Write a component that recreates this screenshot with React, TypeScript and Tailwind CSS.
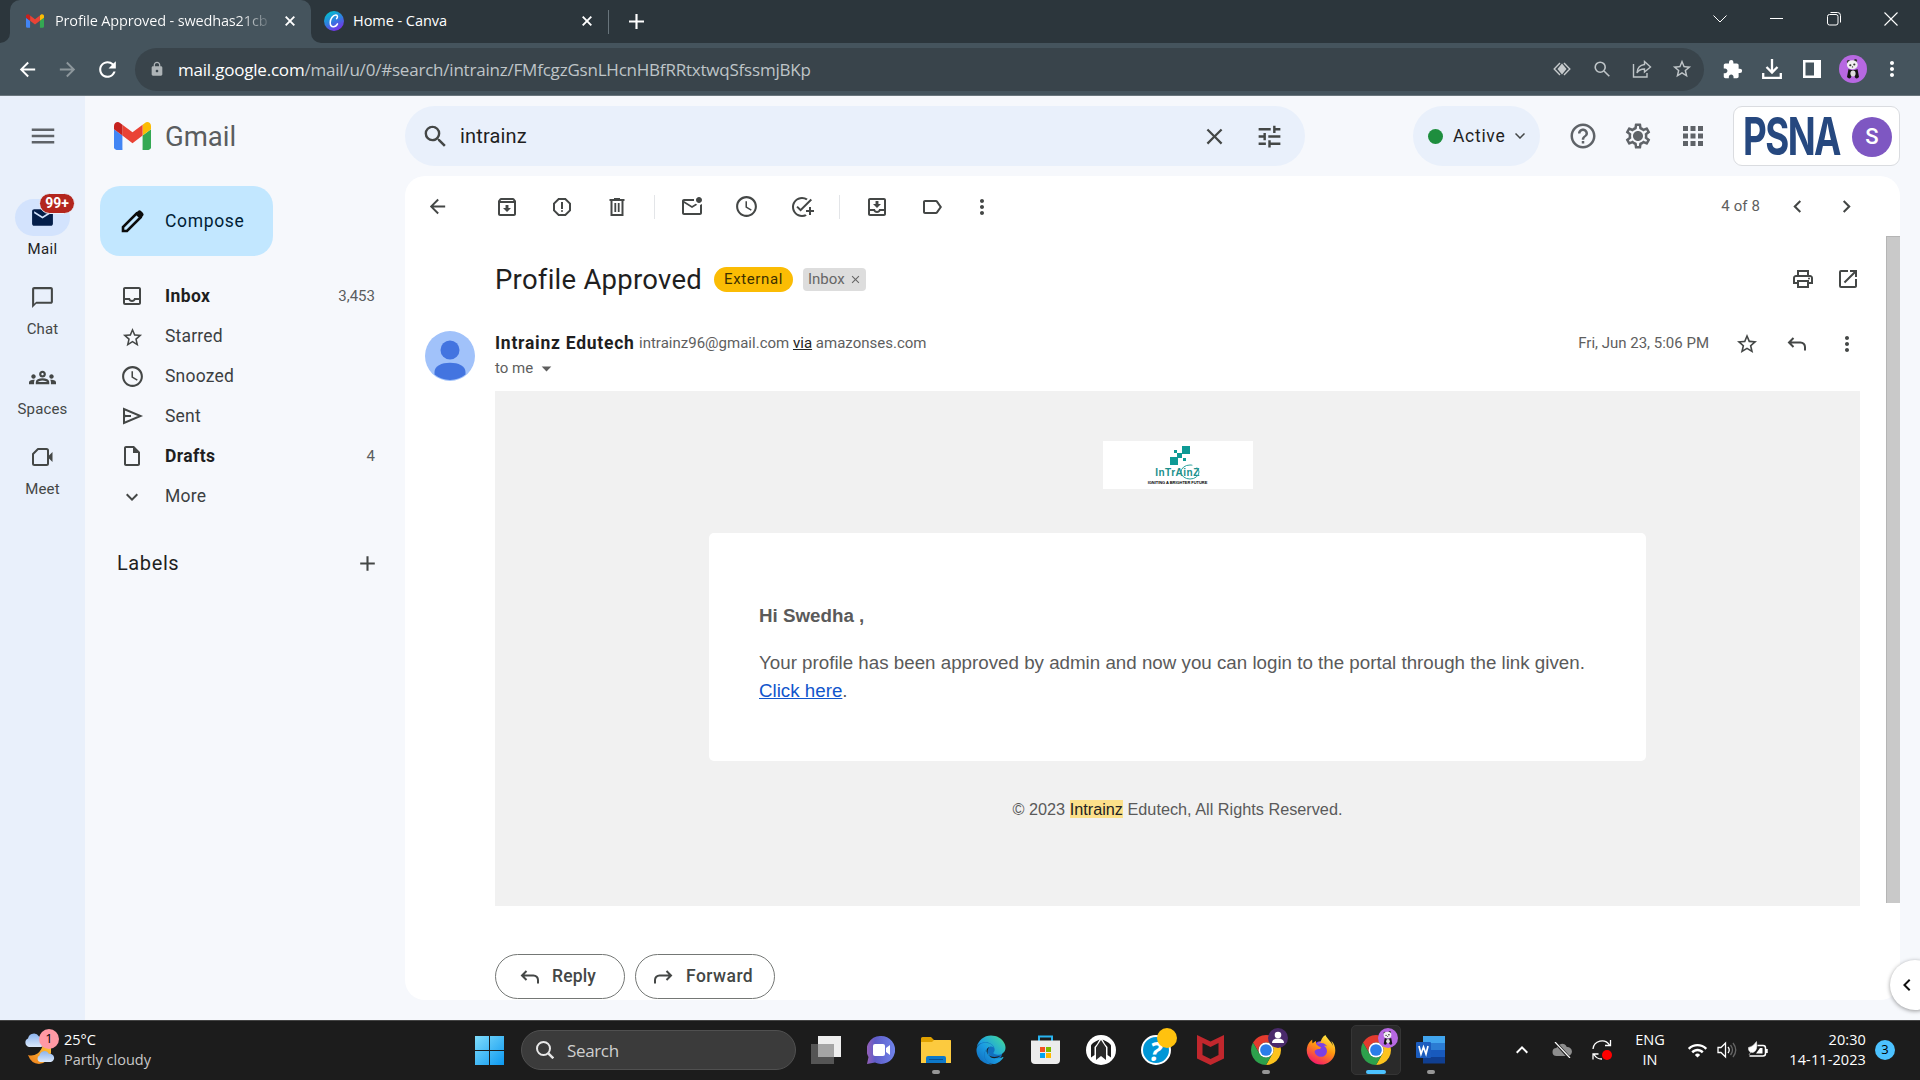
import React from "react";
import {
  MdAddTask, MdApps, MdArrowBack, MdArrowForward, MdChevronLeft, MdChevronRight, MdClose, MdExpandMore,
  MdExtension, MdHelpOutline, MdKeyboardArrowUp, MdLabelOutline, MdLock, MdMail, MdMenu, MdMoreVert, MdOpenInNew,
  MdOutlineArchive, MdOutlineChatBubbleOutline, MdOutlineDelete, MdOutlineGroups, MdOutlineInbox,
  MdOutlineInsertDriveFile, MdOutlineMarkEmailUnread, MdOutlineMoveToInbox, MdOutlinePrint, MdOutlineReport,
  MdOutlineSchedule, MdOutlineSettings, MdRefresh, MdSearch, MdStarBorder, MdTune, MdWifi,
  MdAdd, MdArrowDropDown,
} from "react-icons/md";
import { FaEdge, FaFirefoxBrowser } from "react-icons/fa";

type P = { className?: string };

const GmailLogo = ({ className }: P) => (
  <svg viewBox="52 42 88 66" className={className}>
    <path fill="#4285f4" d="M58 108h14V74L52 59v43c0 3.32 2.69 6 6 6" />
    <path fill="#34a853" d="M120 108h14c3.32 0 6-2.69 6-6V59l-20 15" />
    <path fill="#fbbc04" d="M120 48v26l20-15v-8c0-7.42-8.47-11.65-14.4-7.2" />
    <path fill="#ea4335" d="M72 74V48l24 18 24-18v26L96 92" />
    <path fill="#c5221f" d="M52 51v8l20 15V48l-5.6-4.2c-5.94-4.45-14.4-.22-14.4 7.2" />
  </svg>
);

const CanvaLogo = () => (
  <svg viewBox="0 0 20 20" className="h-5 w-5">
    <defs>
      <linearGradient id="canva" x1="0.2" y1="0" x2="0.7" y2="1">
        <stop offset="0" stopColor="#00c4cc" />
        <stop offset="0.5" stopColor="#2f7fe0" />
        <stop offset="1" stopColor="#7d2ae8" />
      </linearGradient>
    </defs>
    <circle cx="10" cy="10" r="10" fill="url(#canva)" />
    <path d="M12.600 7.600c1.300-1.100 1.200-3.600-.7-3.600C8.800 4 6.200 8.300 6.200 11.500c0 2.500 1.300 4.200 3.200 4.200 1.900 0 3.300-1.300 4.100-2.900" fill="none" stroke="#fff" strokeWidth="1.500" strokeLinecap="round" />
  </svg>
);

const TabClose = () => (
  <svg viewBox="0 0 10 10" className="h-[10px] w-[10px]" fill="none" stroke="#fff" strokeWidth="1.900"><path d="m.7.7 8.600 8.600M9.300.7.7 9.300" /></svg>
);

const Panda = ({ className }: P) => (
  <svg viewBox="0 0 28 28" className={className}>
    <circle cx="14" cy="14" r="14" fill="#b768e2" />
    <path d="M9.500 14c2 1.500 7 1.500 9 0l1.500 8q-2 2.500-4 .5l-.5-2h-3l-.5 2q-2 2-4-.5z" fill="#151515" />
    <ellipse cx="14" cy="18.500" rx="2.600" ry="3" fill="#ddd" />
    <circle cx="9.500" cy="6.800" r="1.700" fill="#333" />
    <circle cx="16.500" cy="5.800" r="1.700" fill="#333" />
    <ellipse cx="13.300" cy="9.800" rx="5.400" ry="4.500" fill="#f0f0f0" />
    <ellipse cx="11.300" cy="10.300" rx="1.100" ry="1" fill="#333" />
    <ellipse cx="15.300" cy="9.500" rx="1.100" ry="1" fill="#333" />
    <circle cx="13.500" cy="11.900" r=".7" fill="#333" />
  </svg>
);

const Chrome = () => {
  const seg = "M6.680 14A20 20 0 0 1 41.320 14H24A10 10 0 0 0 15.340 29Z";
  return (
    <svg viewBox="4 4 40 40" className="h-[30px] w-[30px]">
      <path d={seg} fill="#e33b2e" />
      <path d={seg} fill="#fcc31e" transform="rotate(120 24 24)" />
      <path d={seg} fill="#2da14c" transform="rotate(240 24 24)" />
      <circle cx="24" cy="24" r="10" fill="#fff" />
      <circle cx="24" cy="24" r="7.800" fill="#2b7de9" />
    </svg>
  );
};

const Reply = ({ className }: P) => (
  <svg viewBox="0 0 24 24" className={className} fill="none" stroke="currentColor" strokeWidth="2">
    <path d="M8.500 6 4 10.500 8.500 15M4 10.500h11.500a4.500 4.500 0 0 1 4.500 4.500v3.500" />
  </svg>
);

const Pencil = () => (
  <svg viewBox="0 0 24 24" className="h-[24px] w-[24px]" fill="none" stroke="#0b0b0b" strokeWidth="2.600">
    <path d="M2 22v-4L15.500 4.500l4 4L6 22z" />
    <path d="M14.500 4.500 17 2q1.500-1.300 3 0l2 2q1.300 1.500 0 3l-2.500 2.500z" fill="#0b0b0b" stroke="none" />
  </svg>
);

const Meet = () => (
  <svg viewBox="0 0 24 24" className="h-[24px] w-[24px]" fill="none" stroke="#444746" strokeWidth="2">
    <path d="M8 4h8.500Q18 4 18 5.500v13q0 1.500-1.500 1.500h-12Q3 20 3 18.500V9z" strokeLinejoin="round" />
    <path d="M18 11.500 22.500 7v10L18 12.500z" fill="#444746" stroke="none" />
  </svg>
);

const Sent = () => (
  <svg viewBox="0 0 24 24" className="h-[24px] w-[24px]" fill="none" stroke="#444746" strokeWidth="2">
    <path d="M4 5v14l16.500-7zM4 12h7" />
    <path d="M4 10.500v3l7-1.500z" fill="#444746" stroke="none" />
  </svg>
);

const Cell = ({ className = "", children }: { className?: string; children?: React.ReactNode }) => (
  <div className={`flex shrink-0 items-center justify-center ${className}`}>{children}</div>
);

function TabStrip() {
  return (
    <div className="flex h-[43px] items-stretch bg-[#2c363c] font-['Open_Sans','Noto_Sans',sans-serif] text-[14.5px] text-white">
      <div className="flex w-[10px] bg-[#45545d]"><div className="w-full rounded-br-[10px] bg-[#2c363c]" /></div>
      <div className="flex w-[301px] items-center rounded-t-[10px] bg-[#45545d] pb-px pl-4">
        <GmailLogo className="h-[14px] w-[18px]" />
        <div className="ml-[11px] w-[215px] overflow-hidden whitespace-nowrap bg-gradient-to-r from-white from-85% to-white/10 bg-clip-text tracking-[-0.15px] text-transparent">Profile Approved - swedhas21cb</div>
        <Cell className="w-[40px]"><TabClose /></Cell>
      </div>
      <div className="flex w-[297px] bg-[#45545d]">
        <div className="flex w-full items-center rounded-bl-[10px] bg-[#2c363c] pb-px pl-[13px]">
          <CanvaLogo />
          <span className="ml-[9px] w-[214px] tracking-[-0.05px]">Home - Canva</span>
          <Cell className="w-[40px]"><TabClose /></Cell>
        </div>
      </div>
      <div className="flex flex-1 bg-[#45545d]">
        <div className="flex w-full items-center bg-[#2c363c]">
          <div className="h-6 w-px bg-[#68747b]" />
          <Cell className="w-[54px]"><svg viewBox="0 0 14 14" className="h-[15px] w-[15px]" stroke="#fff" strokeWidth="2"><path d="M7 0v14M0 7h14" /></svg></Cell>
        </div>
      </div>
      <div className="flex items-center bg-[#2c363c] pb-[6px]">
        <Cell className="w-[57px]"><svg viewBox="0 0 14 8" className="h-[8px] w-[14px]" fill="none" stroke="#fff"><path d="m.5.5 6.500 6.500L13.500.5" /></svg></Cell>
        <Cell className="w-[57px]"><div className="h-px w-[13px] bg-white" /></Cell>
        <Cell className="w-[57px]"><svg viewBox="0 0 14 14" className="h-[14px] w-[14px]" fill="none" stroke="#fff"><rect x=".5" y="2.500" width="10.500" height="10.500" rx="2" /><path d="M3.500.5h7q3 0 3 3v7" /></svg></Cell>
        <Cell className="w-[58px]"><svg viewBox="0 0 14 14" className="h-[14px] w-[14px]" stroke="#fff" strokeWidth="1.100"><path d="m.5.5 13 13M13.500.5l-13 13" /></svg></Cell>
      </div>
    </div>
  );
}

function AddressBar() {
  return (
    <div className="flex h-[53px] items-center border-b border-[#6a767d] bg-[#45545d] pl-[7px] text-white">
      <Cell className="w-10"><MdArrowBack className="h-[23px] w-[23px]" /></Cell>
      <Cell className="w-10"><MdArrowForward className="h-[23px] w-[23px] text-[#8d979c]" /></Cell>
      <Cell className="w-10"><MdRefresh className="h-[25px] w-[25px]" /></Cell>
      <div className="ml-[8px] flex h-[43px] w-[1569px] items-center rounded-full bg-[#39444b] pl-[14px] text-[#bfc5c8]">
        <MdLock className="h-4 w-4 text-[#aeb4b7]" />
        <span className="ml-[13px] flex-1 whitespace-nowrap pt-px font-['Open_Sans','Noto_Sans',sans-serif] text-[17px] tracking-[-0.21px]"><span className="text-white">mail.google.com</span>/mail/u/0/#search/intrainz/FMfcgzGsnLHcnHBfRRtxtwqSfssmjBKp</span>
        <Cell className="w-10">
          <svg viewBox="0 0 18 14" className="h-[14px] w-[18px]" fill="none" stroke="#c6cacc" strokeWidth="1.400"><path d="M7 1 1.200 7 7 13M11 1l5.800 6L11 13" /><path d="M9 1.500 4.500 7 9 12.500 13.500 7z" fill="#c6cacc" stroke="none" /></svg>
        </Cell>
        <Cell className="w-10"><svg viewBox="0 0 16 16" className="h-4 w-4" fill="none" stroke="currentColor" strokeWidth="1.600"><circle cx="6.200" cy="6.200" r="5" /><path d="m10 10 5.300 5.300" /></svg></Cell>
        <Cell className="w-10"><svg viewBox="0 0 20 18" className="h-[18px] w-5" fill="none" stroke="currentColor" strokeWidth="1.400"><path d="M1.500 4v13h13.500v-4" /><path d="M12.500 1.500 18.500 7l-6 5V9c-4 0-6 1.200-7.500 4 .3-5 3-8 7.500-8.500z" /></svg></Cell>
        <Cell className="mr-[2px] w-10"><MdStarBorder className="h-[22px] w-[22px]" /></Cell>
      </div>
      <div className="ml-[8px] flex items-center">
        <Cell className="w-10"><MdExtension className="h-[21px] w-[21px]" /></Cell>
        <Cell className="w-10"><svg viewBox="0 0 20 20" className="h-5 w-5" fill="none" stroke="#fff" strokeWidth="2.300"><path d="M10 0v13M4.500 8 10 13.500 15.500 8M1.200 14v4.800h17.600V14" /></svg></Cell>
        <Cell className="w-10"><svg viewBox="0 0 18 18" className="h-[18px] w-[18px]"><path fill="#fff" fillRule="evenodd" d="M0 0h18v18H0zM2.500 2.500v13H11v-13z" /></svg></Cell>
        <Cell className="w-[41px]"><Panda className="h-7 w-7" /></Cell>
        <Cell className="w-[38px]"><MdMoreVert className="h-6 w-6" /></Cell>
      </div>
    </div>
  );
}

function Rail() {
  const items = [
    { label: "Chat", icon: <MdOutlineChatBubbleOutline className="h-[25px] w-[25px]" /> },
    { label: "Spaces", icon: <MdOutlineGroups className="h-[27px] w-[27px]" /> },
    { label: "Meet", icon: <Meet /> },
  ];
  return (
    <div className="flex w-[85px] shrink-0 flex-col items-center bg-[#e9f0fb] pt-[25px] text-[15px] text-[#444746]">
      <MdMenu className="h-[30px] w-[30px] text-[#5f6368]" />
      <div className="mt-[48px] flex h-[80px] flex-col items-center">
        <div className="relative flex h-[37px] w-[55px] items-center justify-center rounded-full bg-[#d3e3fd]">
          <MdMail className="h-[25px] w-[25px] text-[#041e49]" />
          <div className="absolute left-[24px] top-[-6px] flex h-[21px] w-[36px] items-center justify-center rounded-full border border-[#e9f0fb] bg-[#b3261e] text-[14px] font-bold text-white">99+</div>
        </div>
        <span className="mt-[4px] leading-[18px] tracking-[0.4px] text-[#1f1f1f]">Mail</span>
      </div>
      {items.map((i) => (
        <div key={i.label} className="flex h-[80px] flex-col items-center">
          <Cell className="h-[36px]">{i.icon}</Cell>
          <span className="mt-[5px] leading-[18px] tracking-[0.15px]">{i.label}</span>
        </div>
      ))}
    </div>
  );
}

function Sidebar() {
  const ic = "h-[25px] w-[25px] text-[#444746]";
  const rows = [
    { label: "Inbox", bold: true, count: "3,453", icon: <MdOutlineInbox className="h-[24px] w-[24px] text-[#444746]" /> },
    { label: "Starred", icon: <MdStarBorder className="mt-[2px] h-[23px] w-[23px] text-[#444746]" /> },
    { label: "Snoozed", icon: <MdOutlineSchedule className={ic} /> },
    { label: "Sent", icon: <Sent /> },
    { label: "Drafts", bold: true, count: "4", icon: <MdOutlineInsertDriveFile className="h-[24px] w-[24px] text-[#444746]" /> },
    { label: "More", icon: <MdExpandMore className="mt-px h-[24px] w-[24px] text-[#444746]" /> },
  ];
  return (
    <div className="flex w-[320px] shrink-0 flex-col">
      <div className="flex h-[80px] items-center pl-[29px]">
        <GmailLogo className="h-[28px] w-[37px]" />
        <span className="ml-[14px] pt-[2px] text-[27.500px] text-[#5a5d60]">Gmail</span>
      </div>
      <div className="ml-[15px] mt-[10px] flex h-[70px] w-[173px] items-center rounded-[20px] bg-[#c2e7ff] pl-[21px]">
        <Pencil />
        <span className="ml-[20px] text-[17.500px] tracking-[0.65px] text-[#001d35]">Compose</span>
      </div>
      <div className="mt-5">
        {rows.map((r) => (
          <div key={r.label} className="flex h-10 items-center pl-[27px] pr-[30px] text-[17.500px]">
            <Cell className="w-10">{r.icon}</Cell>
            <span className={`ml-[13px] flex-1 pt-px ${r.bold ? "font-bold tracking-[0.4px] text-[#1f1f1f]" : "tracking-[0.2px] text-[#3c3f42]"}`}>{r.label}</span>
            <span className="text-[15px] text-[#5a5d60]">{r.count}</span>
          </div>
        ))}
      </div>
      <div className="mt-[27px] flex h-10 items-center justify-between pl-[32px] pr-[25px] text-[20px] tracking-[0.6px] text-[#1f1f1f]">
        Labels
        <MdAdd className="h-[25px] w-[25px] text-[#444746]" />
      </div>
    </div>
  );
}

function Header() {
  return (
    <div className="flex h-[80px] items-center text-[#5f6368]">
      <div className="flex h-[60px] w-[900px] items-center rounded-full bg-[#e9f0fb] pl-[16px] text-[#444746]">
        <MdSearch className="h-[29px] w-[29px]" />
        <span className="ml-[10px] flex-1 text-[20px] tracking-[0.15px] text-[#1f1f1f]">intrainz</span>
        <Cell className="w-[55px]"><MdClose className="h-[27px] w-[27px]" /></Cell>
        <Cell className="mr-[8px] w-[55px]"><MdTune className="h-[29px] w-[29px]" /></Cell>
      </div>
      <div className="ml-[108px] flex h-[60px] w-[127px] items-center rounded-full bg-[#e9f0fb] pl-[15px]">
        <div className="h-[15px] w-[15px] rounded-full bg-[#1e8e3e]" />
        <span className="ml-[10px] w-[53px] pt-px text-[17.500px] tracking-[0.7px] text-[#1f1f1f]">Active</span>
        <Cell className="w-[27px]"><svg viewBox="0 0 10 6" className="h-[6px] w-[10px]" fill="none" stroke="#444746" strokeWidth="1.500"><path d="m.5.5 4.500 4.500L9.500.5" /></svg></Cell>
      </div>
      <Cell className="ml-[15px] w-[55px]"><MdHelpOutline className="h-[30px] w-[30px]" /></Cell>
      <Cell className="w-[55px]"><svg viewBox="0 0 24 24" className="h-[30px] w-[30px]"><MdOutlineSettings className="h-6 w-6" /><circle cx="12" cy="12" r="3.400" fill="#5f6368" /></svg></Cell>
      <Cell className="w-[55px]"><MdApps className="h-[30px] w-[30px]" /></Cell>
      <div className="ml-[13px] flex h-[60px] w-[167px] items-center rounded-[9px] border border-[#dadce0] bg-white pl-[9px]">
        <div className="h-[50px] w-[97px]">
          <span className="block h-[50px] w-[130px] origin-left scale-x-[0.78] scale-y-[1.1] font-['Inter',sans-serif] text-[47px] font-bold leading-[50px] tracking-[-2px] text-[#26487f]">PSNA</span>
        </div>
        <Cell className="ml-[12px] mt-px h-[40px] w-[40px] rounded-full bg-[#7e57c2] text-[22px] font-medium text-white">S</Cell>
      </div>
    </div>
  );
}

function MailToolbar() {
  const ic = "h-[24px] w-[24px]";
  return (
    <div className="flex h-[60px] shrink-0 items-center pl-[4px] pt-px text-[#444746]">
      <Cell className="w-[56px]"><MdArrowBack className="h-[23px] w-[23px]" /></Cell>
      <Cell className="ml-[14px] w-[55px]"><MdOutlineArchive className={ic} /></Cell>
      <Cell className="w-[55px]"><MdOutlineReport className={ic} /></Cell>
      <Cell className="w-[55px]">
        <svg viewBox="0 0 24 24" className={ic} fill="none" stroke="#444746" strokeWidth="2"><path d="M4.500 5h15M9 4h6M6.500 5v15h11V5" /><path d="M10.300 8v9M13.700 8v9" strokeWidth="1.800" /></svg>
      </Cell>
      <Cell className="w-5"><div className="h-6 w-px bg-[#e3e5e8]" /></Cell>
      <Cell className="w-[55px]"><MdOutlineMarkEmailUnread className={ic} /></Cell>
      <Cell className="w-[55px]"><MdOutlineSchedule className="h-[25px] w-[25px]" /></Cell>
      <Cell className="w-[55px]"><MdAddTask className={ic} /></Cell>
      <Cell className="w-5"><div className="h-6 w-px bg-[#e3e5e8]" /></Cell>
      <Cell className="w-[55px]"><MdOutlineMoveToInbox className={ic} /></Cell>
      <Cell className="w-[55px]"><MdLabelOutline className={ic} /></Cell>
      <Cell className="ml-px w-[44px]"><MdMoreVert className={ic} /></Cell>
      <span className="ml-auto text-[15px] tracking-[0.1px] text-[#5e5e5e]">4 of 8</span>
      <Cell className="ml-[13px] w-[49px]"><MdChevronLeft className="h-[25px] w-[25px]" /></Cell>
      <Cell className="mr-[29px] w-[49px]"><MdChevronRight className="h-[25px] w-[25px]" /></Cell>
    </div>
  );
}

function IntrainzLogo() {
  return (
    <div className="relative flex h-[48px] w-[150px] flex-col items-center bg-white pt-[5px]">
      <svg viewBox="0 0 20 19" className="ml-[4px] h-[19px] w-5" fill="#0e9a95"><path d="M12 0h8v8h-8zM7 7h5v5H7zM0 11h8v8H0zM4 4h3v3H4zM13 12h3v3h-3z" /></svg>
      <span className="mt-[1px] text-[10px] font-bold leading-[13px] tracking-[0.500px] text-[#1b8f8c]">InTrAinZ</span>
      <svg viewBox="0 0 20 16" className="absolute left-[77px] top-[23px] h-[16px] w-5" fill="none" stroke="#2aa29e"><ellipse cx="10" cy="8" rx="9" ry="7" strokeDasharray="40 5" /></svg>
      <span className="mt-[1px] whitespace-nowrap text-[4px] font-black leading-[5px] tracking-[-0.050px] text-black">IGNITING A BRIGHTER FUTURE</span>
    </div>
  );
}

function Message() {
  return (
    <div className="flex min-h-0 flex-1">
      <div className="flex w-[1481px] flex-col">
        <div className="flex h-[86px] items-center pl-[90px] text-[#444746]">
          <span className="w-[219px] whitespace-nowrap pt-px text-[27.500px] tracking-[0.25px] text-[#1f1f1f]">Profile Approved</span>
          <Cell className="h-[25px] w-[79px] rounded-full bg-[#fbbc04] text-[15px] tracking-[0.6px] text-[#3c3000]">External</Cell>
          <div className="ml-[10px] flex h-[23px] w-[63px] items-center rounded-[4px] bg-[#ddd] pl-[5px] text-[15px] text-[#666]">Inbox<MdClose className="ml-[4px] h-[13px] w-[13px]" /></div>
          <Cell className="ml-auto w-[45px]"><MdOutlinePrint className="h-[24px] w-[24px]" /></Cell>
          <Cell className="mr-[16px] w-[45px]"><MdOpenInNew className="h-[24px] w-[24px]" /></Cell>
        </div>
        <div className="flex h-[69px] pl-[20px] pt-[9px]">
          <svg viewBox="0 0 50 50" className="h-[50px] w-[50px]">
            <circle cx="25" cy="25" r="25" fill="#a1c2fa" />
            <circle cx="25" cy="19" r="9.500" fill="#4374e0" />
            <path d="M9.500 43.500V41c0-6 7-9.300 15.500-9.300S40.500 35 40.500 41v2.500A25 25 0 0 1 9.500 43.500Z" fill="#4374e0" />
          </svg>
          <div className="ml-[20px] flex flex-1 flex-col text-[15px] text-[#5e5e5e]">
            <div className="flex h-[24px] items-center whitespace-nowrap">
              <span className="w-[144px] text-[17.500px] font-bold tracking-[0.75px] text-[#1f1f1f]">Intrainz Edutech</span>
              <span className="tracking-[0.01px]">intrainz96@gmail.com <span className="text-[#222] underline">via</span> amazonses.com</span>
            </div>
            <div className="flex h-[26px] items-center">to me<MdArrowDropDown className="ml-[2px] h-[23px] w-[23px]" /></div>
          </div>
          <div className="flex h-[26px] items-center text-[#444746]">
            <span className="mr-[12px] pb-[2px] text-[15px] text-[#5e5e5e]">Fri, Jun 23, 5:06 PM</span>
            <Cell className="w-[51px]"><MdStarBorder className="h-[24px] w-[24px]" /></Cell>
            <Cell className="w-[50px]"><Reply className="h-[24px] w-[24px]" /></Cell>
            <Cell className="mr-[15px] w-[49px]"><MdMoreVert className="h-[24px] w-[24px]" /></Cell>
          </div>
        </div>
        <div className="ml-[90px] flex h-[515px] w-[1365px] flex-col items-center bg-[#f1f1f1] pt-[50px] font-['Liberation_Sans',sans-serif] text-[#5a5a5a]">
          <IntrainzLogo />
          <div className="mt-[44px] h-[228px] w-[937px] rounded-[5px] bg-white px-[50px] pt-[69px] text-[18.750px] leading-[28px]">
            <p className="whitespace-nowrap font-bold">Hi Swedha ,</p>
            <p className="mt-[19px] whitespace-nowrap">Your profile has been approved by admin and now you can login to the portal through the link given.<br /><a className="text-[#1155cc] underline">Click here</a>.</p>
          </div>
          <p className="mt-[38px] text-[16.250px] leading-[20px]">© 2023 <span className="bg-[#fce08a] text-[#222]">Intrainz</span> Edutech, All Rights Reserved.</p>
        </div>
        <div className="ml-[90px] mt-[48px] flex gap-[10px] text-[17.500px] font-medium tracking-[0.15px] text-[#444746]">
          <div className="flex h-[45px] w-[130px] items-center rounded-full border border-[#747775] pl-[22px]"><Reply className="mr-[10px] h-[24px] w-[24px]" />Reply</div>
          <div className="flex h-[45px] w-[140px] items-center rounded-full border border-[#747775] pl-[15px]"><Reply className="mr-[11px] h-[24px] w-[24px] -scale-x-100" /><span className="tracking-[0.45px]">Forward</span></div>
        </div>
      </div>
      <div className="h-[667px] w-[14px] border-l border-t border-[#b5b5b5] bg-[#c9c9c9]" />
    </div>
  );
}

const Dot = () => <div className="absolute bottom-[6px] h-[4px] w-[8px] rounded-full bg-[#969696]" />;
const App55 = ({ children, dot }: { children: React.ReactNode; dot?: boolean }) => (
  <div className="relative flex h-[60px] w-[55px] shrink-0 items-center justify-center">{children}{dot && <Dot />}</div>
);

function Taskbar() {
  return (
    <div className="flex h-[60px] items-center border-t border-[#444] bg-[#1c1c1c] pb-px font-['Open_Sans','Noto_Sans',sans-serif] text-[14.500px] text-white">
      <div className="flex w-[462px] items-center pl-[24px]">
        <div className="relative -mt-[4px] h-[38px] w-[34px]">
          <svg viewBox="0 0 34 38" className="h-[38px] w-[34px]">
            <defs><linearGradient id="moon" x1="1" y1="0" x2="0" y2="1"><stop offset="0" stopColor="#ffc93c" /><stop offset="1" stopColor="#ef7d1a" /></linearGradient>
              <linearGradient id="cloud" x1="0" y1="0" x2="0" y2="1"><stop offset="0" stopColor="#8cb4ee" /><stop offset="1" stopColor="#dbe9fc" /></linearGradient></defs>
            <path d="M27 14v10q-3 10-12 11Q7 34.500 4 26q5 1.500 9.500-1.500Q18 21 19 15z" fill="url(#moon)" />
            <path d="M5 18a4.500 4.500 0 0 1-1-8.500 6 6 0 0 1 11-2 5 5 0 0 1 2 10.500z" fill="url(#cloud)" />
            <path d="M16 33a3.500 3.500 0 0 1-.5-6.500 5 5 0 0 1 9.500-1.500 4 4 0 0 1 2 8z" fill="url(#cloud)" />
          </svg>
          <Cell className="absolute left-[15px] top-0 h-5 w-5 rounded-full bg-[#ff99a4] text-[13px] text-black">1</Cell>
        </div>
        <div className="ml-[6px] leading-[20px]"><div>25°C</div><div className="text-[#c8c8c8]">Partly cloudy</div></div>
      </div>
      <App55>
        <svg viewBox="0 0 29 29" className="h-[29px] w-[29px]"><defs><linearGradient id="win" gradientUnits="userSpaceOnUse" x1="0" y1="0" x2="29" y2="29"><stop offset="0" stopColor="#7fdcfb" /><stop offset="1" stopColor="#0c98f0" /></linearGradient></defs><path d="M0 0h14v14H0zM15 0h14v14H15zM0 15h14v14H0zM15 15h14v14H15z" fill="url(#win)" /></svg>
      </App55>
      <div className="ml-[4px] flex h-[40px] w-[275px] items-center rounded-full border border-[#505050] bg-[#3b3b3b] pl-[14px] text-[17px] text-[#cfcfcf]">
        <svg viewBox="0 0 18 18" className="h-[18px] w-[18px]" fill="none" stroke="#e8e8e8" strokeWidth="2"><circle cx="7.500" cy="7.500" r="6.500" /><path d="m12.300 12.300 5 5" strokeWidth="2.400" /></svg>
        <span className="ml-[13px] pt-px tracking-[-0.35px]">Search</span>
      </div>
      <div className="ml-[2px] flex">
        <App55><svg viewBox="0 0 30 28" className="h-[28px] w-[30px]"><path d="M7 0h23v21H7z" fill="#eee" /><path d="M0 8h23v20H0z" fill="#555" /><path d="M7 8h16v13H7z" fill="#a5a5a5" /></svg></App55>
        <App55><svg viewBox="0 0 28 28" className="h-[28px] w-[28px]"><defs><linearGradient id="chat" x1="0" y1="0.500" x2="1" y2="0.500"><stop offset="0" stopColor="#9760b8" /><stop offset="0.300" stopColor="#5f5cc8" /><stop offset="1" stopColor="#6f83ea" /></linearGradient></defs><path d="M14 0a14 14 0 1 1-6 26.600L0 28l1.500-7A14 14 0 0 1 14 0" fill="url(#chat)" /><rect x="6" y="8" width="12" height="12" rx="2" fill="#fff" /><path d="m19 12 4-3v10l-4-3z" fill="#fff" /></svg></App55>
        <App55 dot><svg viewBox="0 0 30 26" className="h-[26px] w-[30px]"><path d="M0 1.500Q0 0 1.500 0H10l3 3h17v8H0z" fill="#e0a100" /><path d="M0 5h11l2-2h15.500Q30 3 30 4.500V26H0z" fill="#fcca3f" /><path d="M5 26v-5q0-2 2-2h16q2 0 2 2v5z" fill="#0d78c9" /><path d="M8 22.500h14" stroke="#0a4f91" /></svg></App55>
        <App55>
          <svg viewBox="0 0 30 30" className="h-[30px] w-[30px]"><defs><linearGradient id="ed" x1="0" y1="1" x2="1" y2="0"><stop offset="0" stopColor="#0f62b8" /><stop offset="0.450" stopColor="#1b9de2" /><stop offset="0.800" stopColor="#36c8b4" /><stop offset="1" stopColor="#62dc58" /></linearGradient></defs><circle cx="14" cy="16" r="12.500" fill="#1170c0" /><FaEdge size={30} fill="url(#ed)" /><path d="M13 12a5 5 0 0 0 1 9q5 2 11-.500-5 4-10 2-6-4-2-10.500" fill="#1c1c1c" /></svg>
        </App55>
        <App55><svg viewBox="0 0 30 30" className="h-[30px] w-[30px]"><path d="M8 6V1.500h13V6" fill="none" stroke="#28b4f0" strokeWidth="2" /><path d="M0 5.500h29V25q0 4-4 4H4q-4 0-4-4z" fill="#ececec" /><path d="M9 12h5v5H9z" fill="#f25022" /><path d="M15 12h5v5h-5z" fill="#7fba00" /><path d="M9 18h5v5H9z" fill="#00a4ef" /><path d="M15 18h5v5h-5z" fill="#ffb900" /></svg></App55>
        <App55><svg viewBox="0 0 30 30" className="h-[30px] w-[30px]"><circle cx="15" cy="15" r="15" fill="#fff" /><path d="M5 22.500V10.500Q5.500 8 13.500 4.500L11 9l-2.500 3v8zM25 22.500V10.500Q24.500 8 16.500 4.500L19 9l2.500 3v8z" fill="#1c1c1c" /><path d="M10 25V12.500L15 5l5 7.500V25l-5-4z" fill="#2a2a2a" /></svg></App55>
        <App55>
          <Cell className="h-[30px] w-[30px] rounded-full border-2 border-white bg-[#0096d6] text-[27px] font-bold italic leading-none">?</Cell>
          <div className="absolute right-[6px] top-[8px] h-5 w-5 rounded-full bg-[#ffc20e]" />
        </App55>
        <App55><svg viewBox="0 0 27 30" className="h-[30px] w-[27px]"><path d="M0 0 13.500 6.500 27 0v23.500L13.500 30 0 23.500zM5.500 8v12l8 4 8-4V8l-8 4z" fill="#c1272d" fillRule="evenodd" /></svg></App55>
        <App55 dot><Chrome />
          <svg viewBox="0 0 20 20" className="absolute right-[5px] top-[8px] h-5 w-5"><circle cx="10" cy="10" r="10" fill="#4a2a6b" /><circle cx="10" cy="7" r="3.300" fill="#fff" /><path d="M4 15q0-4.500 6-4.500t6 4.500z" fill="#fff" /></svg>
        </App55>
        <App55>
          <svg viewBox="0 0 30 30" className="h-[30px] w-[30px]"><defs><linearGradient id="ff" x1="0.800" y1="0" x2="0.300" y2="1"><stop offset="0" stopColor="#fff24a" /><stop offset="0.450" stopColor="#ff980e" /><stop offset="1" stopColor="#f5156c" /></linearGradient></defs><circle cx="15" cy="15" r="9" fill="#7b3fe4" /><FaFirefoxBrowser size={30} fill="url(#ff)" /></svg>
        </App55>
        <App55>
          <div className="absolute left-[3px] top-[5px] h-[50px] w-[50px] rounded-[5px] border border-[#353535] bg-[#2a2a2a]" />
          <div className="relative h-[30px]"><Chrome /></div>
          <Panda className="absolute right-[5px] top-[8px] h-5 w-5" />
          <div className="absolute bottom-[6px] h-[4px] w-[20px] rounded-full bg-[#4cc2ff]" />
        </App55>
        <App55 dot><svg viewBox="0 0 29 28" className="h-[28px] w-[29px]"><path d="M7 0h22v7H7z" fill="#41a5ee" /><path d="M7 7h22v7H7z" fill="#2b7cd3" /><path d="M7 14h22v7H7z" fill="#185abd" /><path d="M7 21h22v6.500H7z" fill="#103f91" /><rect y="6" width="15" height="16" rx="1" fill="#1b5cbe" /><path d="m3 10 2 8L7.500 11 10 18l2-8" fill="none" stroke="#fff" strokeWidth="1.700" /></svg></App55>
      </div>
      <div className="ml-auto flex items-center">
        <Cell className="w-10"><MdKeyboardArrowUp className="h-[24px] w-[24px]" /></Cell>
        <Cell className="w-10"><svg viewBox="0 0 20 16" className="h-4 w-5"><path d="M4.500 14a4 4 0 0 1 0-8 5.500 5.500 0 0 1 10.300-1A4.500 4.500 0 0 1 16 14z" fill="#8d8d8d" /><path d="m3 0 14 15.500" stroke="#1c1c1c" strokeWidth="3" /><path d="m3 0 15 16" stroke="#fff" strokeWidth="1.200" /></svg></Cell>
        <Cell className="relative w-10"><svg viewBox="0 0 20 20" className="h-5 w-5" fill="none" stroke="#fff" strokeWidth="1.300"><path d="M1 9a9 9 0 0 1 16.500-4M18.500 0v5.500H13M10 19a9 9 0 0 1-8-4.500M1 19.500V14h5.500" /><circle cx="15" cy="15" r="5" fill="#f00" stroke="none" /></svg></Cell>
        <div className="w-[56px] text-center leading-[20px]">ENG<br />IN</div>
        <Cell className="ml-[4px] w-[30px]"><MdWifi className="h-[21px] w-[21px]" /></Cell>
        <Cell className="w-[30px]"><svg viewBox="0 0 20 18" className="h-[18px] w-5" fill="none" stroke="#fff" strokeWidth="1.300"><path d="M1 6.500h3L8.500 2v14L4 11.500H1zM11 6q2.500 3 0 6" /><path d="M13.500 4q4 5 0 10M16 2q5.500 7 0 14" stroke="#666" /></svg></Cell>
        <Cell className="w-[31px]"><svg viewBox="0 0 20 18" className="h-[18px] w-5" fill="none" stroke="#fff" strokeWidth="1.500"><path d="M9.500 4.500H15q2.500 0 2.500 2.500v5.500Q17.500 15 15 15H1.500M19 8v4" /><path d="M14.500 7v5.500H8L12 7z" fill="#fff" stroke="none" /><path d="M8.500.5Q10 10 5 11.500q-5 0-4.500-5Q5 6 8.500.5M1 14l4-7" fill="#fff" strokeWidth=".5" /></svg></Cell>
        <div className="w-[93px] whitespace-nowrap text-right leading-[20px] tracking-[0.1px]">20:30<br />14-11-2023</div>
        <Cell className="ml-[9px] mr-[25px] h-5 w-5 rounded-full bg-[#4cc2ff] text-[13px] text-black">3</Cell>
      </div>
    </div>
  );
}

export default function App() {
  return (
    <div className="flex h-[1080px] w-[1920px] flex-col overflow-hidden bg-[#f6f8fc] font-['Roboto',sans-serif]">
      <TabStrip />
      <AddressBar />
      <div className="relative flex h-[924px] bg-[#f6f8fc]">
        <Rail />
        <Sidebar />
        <div className="flex w-[1495px] flex-col">
          <Header />
          <div className="flex h-[824px] flex-col overflow-hidden rounded-[20px] bg-white">
            <MailToolbar />
            <Message />
          </div>
        </div>
        <div className="absolute right-[-20px] top-[864px] flex h-[50px] w-[50px] items-center rounded-full bg-white pl-[5px] shadow-[0_1px_4px_rgba(0,0,0,0.4)]">
          <MdChevronLeft className="h-[24px] w-[24px] text-[#111]" />
        </div>
      </div>
      <Taskbar />
    </div>
  );
}
